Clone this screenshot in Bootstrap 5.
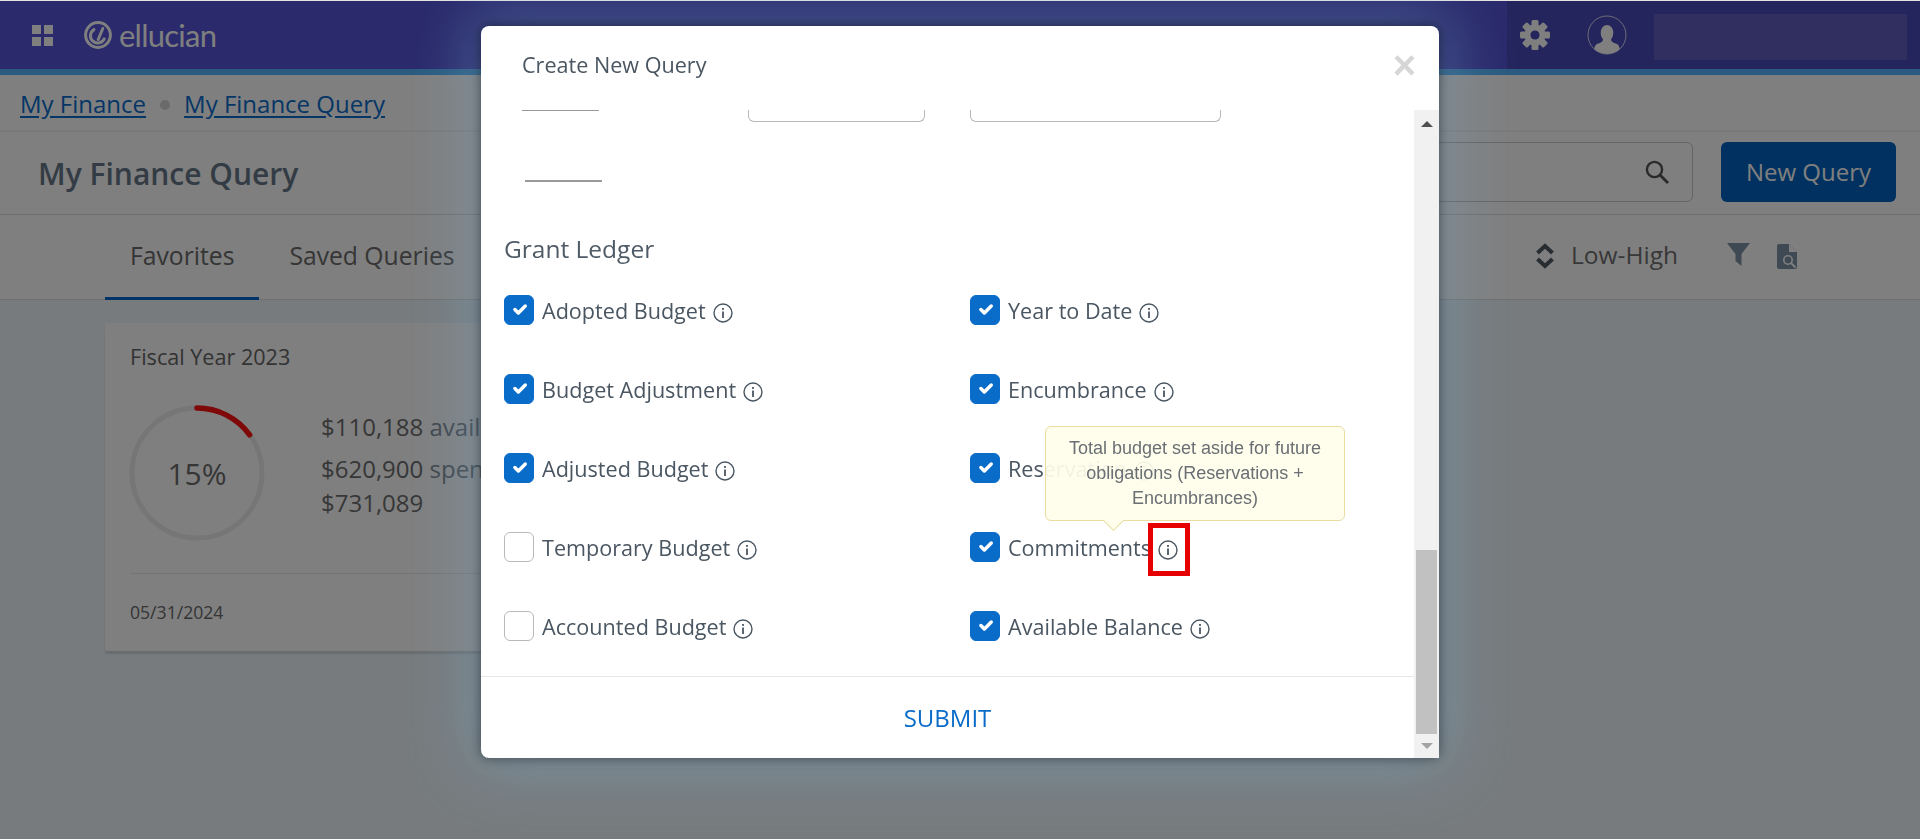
<!DOCTYPE html>
<html lang="en">
<head>
<meta charset="utf-8">
<title>My Finance Query</title>
<link href="https://cdn.jsdelivr.net/npm/bootstrap@5.3.0/dist/css/bootstrap.min.css" rel="stylesheet">
<style>
html,body{height:839px;overflow:hidden}
body{font-family:"Open Sans","Liberation Sans",sans-serif;background:#eef7fb;color:#5b6771}
.top-strip{height:75px;background:#5454d8;border-top:1px solid #e4e4e4;border-bottom:6px solid #55b5ff;padding:0}
.logo-word{font-family:Lato,"Liberation Sans",sans-serif;font-weight:400;font-size:31px;color:#fff;line-height:1;letter-spacing:-.75px}
.top-right{height:68px;background:#4a4abc;padding:0 13px 0 0;gap:0}
.mask-box{width:253px;height:46px;background:#605fc0;margin-top:3px}
.crumbs{height:57px;background:#fff;border-bottom:2px solid #f4f4f4;padding:2px 20px 0;gap:14px;font-size:24px}
.crumbs a{color:#0a6ccc;text-underline-offset:3px}
.crumb-dot{width:10px;height:10px;border-radius:50%;background:#d4d4d4;margin:2px 0 0}
.title-row{height:83px;background:#fff;border-bottom:1px solid #dcdcdc;padding:0 24px 0 38px}
.page-title{font-size:30px;font-weight:600;color:#66788a;margin:2px 0 0}
.title-tools{margin-top:-2px}
.search-stub{width:500px;height:60px;border:1px solid #c8c8c8;border-radius:6px;padding-right:22px;margin-right:28px}
.new-btn{width:175px;height:60px;background:#0062c0;color:#fff;font-size:24px;border-radius:6px;border:0;padding:0}
.tab-row{height:85px;background:#fff;border-bottom:1px solid #dcdcdc;padding:0 123px 0 105px}
.tab-item{height:85px;padding:0 25px;font-size:24.700px;color:#6d6d6d;font-weight:500;margin-right:5px;line-height:82px}
.tab-on{border-bottom:3px solid #0068d0;color:#6a6a6a}
.sort-txt{font-size:24.500px;color:#707070;margin-left:16px;margin-right:49px;margin-top:-2px}
.page-area{padding:23px 0 0 105px}
.fin-card{width:600px;height:328px;background:#fff;border:0;border-radius:2px;box-shadow:0 3px 2px rgba(0,0,0,.12);padding:0 25px}
.fin-name{font-size:21.600px;font-weight:500;color:#666;margin:22px 0 0;line-height:24px}
.fin-ring{width:136px;height:136px;flex:none;margin-left:-1px}
.fin-pct{font-size:30px;color:#6c6c6c}
.fin-text{font-size:24px;color:#6e6e6e;line-height:34px;margin:5px 0 0 56px;white-space:nowrap}
.fin-text div:first-child{margin-bottom:8px}
.fin-word{color:#7f8b96}
.fin-date{font-size:17.600px;color:#6a6a6a;border-top:1px solid #e8e8e8;margin-top:32px;padding-top:25px}
.modal-backdrop{top:1px;height:838px}
.dlg{max-width:958px;width:958px;margin:26px auto 0}
.dlg-box{height:732px;border:0;border-radius:8px;box-shadow:0 0 12px 1px rgba(0,0,0,.42),0 0 60px 14px rgba(125,175,210,.36);overflow:visible}
.dlg-head{height:84px;padding:0 23px 0 41px;border:0}
.dlg-title{font-size:21.600px;color:#4a5661;line-height:1;margin-top:-6px}
.dlg-x{font-size:40px;font-weight:700;color:#d6d6d6;line-height:1;font-family:"Liberation Sans",sans-serif;background:none;border:0;padding:0;margin-top:-7px}
.dlg-main{min-width:0;height:648px}
.dlg-body{padding:0 0 0 23px;overflow:hidden;height:566px;flex:none}
.stub-row{height:71px}
.stub-line{height:2px;width:77px;background:#999;margin-top:-1px}
.stub-in{height:12px;border:1px solid #b8b8b8;border-top:0;border-radius:0 0 6px 6px;margin-top:0}
.group-name{font-size:24.500px;font-weight:500;color:#4f5b66;line-height:28px;margin:53px 0 32px}
.check-grid{display:grid;grid-template-columns:466px 1fr;grid-auto-rows:79px}
.check-row{height:30px;gap:8px}
.check-row .form-check-input{width:30px;height:30px;margin:0;flex:none;border:1px solid #b9b9b9;border-radius:6px;background-size:23px;background-position:50% 42%}
.check-row .form-check-input:checked{background-color:#0a6cc9;border-color:#0a6cc9}
.check-txt{font-size:21.600px;color:#4a5661;font-weight:500;margin-top:4px;line-height:24px;white-space:nowrap}
.info-i{flex:none;margin:8px 0 0 -1px}
.dlg-foot{height:82px;border-top:1px solid #e6e6e6;padding:0}
.submit-link{font-size:24px;color:#0a6cc9;text-decoration:none;margin-top:4px}
.bar-col{width:25px;flex:none;background:#f1f1f1;padding:0 2px}
.bar-thumb{height:184px;background:#c1c1c1;margin-top:auto;margin-bottom:24px}
.bar-up{width:0;height:0;border:6px solid transparent;border-top:0;border-bottom:6px solid #505050;margin:11px auto 0}
.bar-down{width:0;height:0;border:6px solid transparent;border-bottom:0;border-top:6px solid #a3a3a3;position:absolute;bottom:9px;left:50%;margin-left:-6px}
.hint-box{position:absolute;left:564px;top:400px;width:300px;height:95px;background:rgba(255,254,236,.93);border:1px solid #e8dca0;border-radius:6px;color:#6a6f74;font-family:"Liberation Sans",Arial,sans-serif;font-size:18px;line-height:25px;text-align:center;padding:9px 20px}
.hint-box::after{content:"";position:absolute;left:60px;bottom:-8px;width:15px;height:15px;background:#fffeec;border-right:1px solid #e8dca0;border-bottom:1px solid #e8dca0;transform:rotate(45deg)}
.mark-box{position:absolute;left:667px;top:497px;width:42px;height:53px;border:5px solid #e60000}
</style>
</head>
<body>
<nav class="navbar top-strip d-flex justify-content-between align-items-start flex-nowrap">
  <div class="d-flex align-items-center" style="height:68px">
    <svg width="21" height="21" viewBox="0 0 21 21" style="margin-left:32px" aria-hidden="true"><g fill="#fff"><rect width="9" height="9" x="0" y="0"/><rect width="9" height="9" x="12" y="0"/><rect width="9" height="9" x="0" y="12"/><rect width="9" height="9" x="12" y="12"/></g></svg>
    <svg width="30" height="30" viewBox="0 0 30 30" style="margin:0 6px 0 30px" aria-hidden="true"><circle cx="15" cy="15" r="12.400" fill="none" stroke="#fff" stroke-width="3"/><path d="M19.800 8.500 15.200 19.500M11 9.600a7.200 7.200 0 1 0 10.200 9.200" fill="none" stroke="#fff" stroke-width="3" stroke-linecap="round"/></svg>
    <span class="logo-word">ellucian</span>
  </div>
  <div class="top-right d-flex align-items-center">
    <svg width="32" height="32" viewBox="0 0 32 32" style="margin:0 0 0 12px" aria-hidden="true"><g fill="#fff"><rect x="12.500" y="1" width="7" height="30" rx="1.500"/><rect x="12.500" y="1" width="7" height="30" rx="1.500" transform="rotate(45 16 16)"/><rect x="12.500" y="1" width="7" height="30" rx="1.500" transform="rotate(90 16 16)"/><rect x="12.500" y="1" width="7" height="30" rx="1.500" transform="rotate(135 16 16)"/></g><circle cx="16" cy="16" r="10.500" fill="#fff"/><circle cx="16" cy="16" r="4.600" fill="#4a4abc"/></svg>
    <svg width="40" height="40" viewBox="0 0 40 40" style="margin:0 27px 0 36px" aria-hidden="true"><defs><clipPath id="av"><circle cx="20" cy="20" r="19"/></clipPath></defs><circle cx="20" cy="20" r="19" fill="none" stroke="#fff" stroke-width=".8"/><g clip-path="url(#av)" fill="#fff"><ellipse cx="20" cy="18" rx="6.300" ry="8"/><path d="M16 24c0 3-3 4-6 5-2 1-3 3-3 11h26c0-8-1-10-3-11-3-1-6-2-6-5z"/></g></svg>
    <div class="mask-box"></div>
  </div>
</nav>

<div class="crumbs d-flex align-items-center">
  <a href="#">My Finance</a><span class="crumb-dot"></span><a href="#">My Finance Query</a>
</div>

<div class="title-row d-flex align-items-center justify-content-between">
  <h1 class="page-title">My Finance Query</h1>
  <div class="title-tools d-flex align-items-center">
    <div class="search-stub d-flex align-items-center justify-content-end">
      <svg width="26" height="26" viewBox="0 0 26 26" aria-hidden="true"><circle cx="10.500" cy="10.500" r="7.600" fill="none" stroke="#555" stroke-width="2.400"/><path d="M16 16l8 8" stroke="#555" stroke-width="2.800"/></svg>
    </div>
    <button class="btn new-btn" type="button">New Query</button>
  </div>
</div>

<div class="tab-row d-flex align-items-start">
  <div class="tab-item tab-on">Favorites</div>
  <div class="tab-item">Saved Queries</div>
  <div class="d-flex align-items-center ms-auto" style="height:82px">
    <svg width="20" height="26" viewBox="0 0 20 26" aria-hidden="true"><path d="M2.500 10 10 3l7.500 7M2.500 16l7.500 7 7.500-7" fill="none" stroke="#505a64" stroke-width="4"/></svg>
    <span class="sort-txt">Low-High</span>
    <svg width="23" height="24" viewBox="0 0 23 24" style="margin-right:27px;margin-top:-3px" aria-hidden="true"><path d="M0 0h23l-8.500 11v12l-6-5V11z" fill="#7c93a8"/></svg>
    <svg width="20" height="25" viewBox="0 0 20 25" aria-hidden="true"><path d="M2 0h10l8 8v15a2 2 0 0 1-2 2H2a2 2 0 0 1-2-2V2a2 2 0 0 1 2-2z" fill="#7c93a8"/><path d="M12 0v8h8z" fill="#fff"/><circle cx="11" cy="16" r="4.200" fill="none" stroke="#fff" stroke-width="1.600"/><path d="M14 19l4.500 4.500" stroke="#fff" stroke-width="1.800"/></svg>
  </div>
</div>

<main class="page-area">
  <div class="card fin-card">
    <div class="fin-name">Fiscal Year 2023</div>
    <div class="d-flex align-items-start" style="margin-top:36px">
      <div class="position-relative fin-ring">
        <svg width="136" height="136" viewBox="0 0 136 136" aria-hidden="true"><circle cx="68" cy="68" r="65" fill="none" stroke="#ececec" stroke-width="5"/><path d="M68 3A65 65 0 0 1 120.600 29.800" fill="none" stroke="#ff1010" stroke-width="5.500" stroke-linecap="round"/></svg>
        <div class="position-absolute top-50 start-50 translate-middle fin-pct">15%</div>
      </div>
      <div class="fin-text">
        <div>$110,188 <span class="fin-word">available</span></div>
        <div>$620,900 <span class="fin-word">spent</span></div>
        <div>$731,089</div>
      </div>
    </div>
    <div class="fin-date">05/31/2024</div>
  </div>
</main>

<div class="modal-backdrop fade show"></div>
<div class="modal fade show d-block" tabindex="-1" role="dialog">
  <div class="modal-dialog dlg">
    <div class="modal-content dlg-box">
      <div class="modal-header dlg-head">
        <span class="dlg-title">Create New Query</span>
        <button class="dlg-x ms-auto" type="button" aria-label="Close">×</button>
      </div>
      <div class="d-flex">
        <div class="dlg-main flex-grow-1 d-flex flex-column">
          <div class="modal-body dlg-body">
            <div class="stub-row d-flex align-items-start position-relative" style="padding-left:18px">
              <div class="stub-line"></div>
              <div class="stub-in" style="width:177px;margin-left:149px"></div>
              <div class="stub-in" style="width:251px;margin-left:45px"></div>
            </div>
            <div class="stub-line" style="margin-left:21px"></div>
            <div class="group-name">Grant Ledger</div>
            <div class="check-grid">
              <div class="check-row d-flex"><input class="form-check-input" type="checkbox" checked aria-label="Adopted Budget"><span class="check-txt">Adopted Budget</span><svg class="info-i" width="20" height="20" viewBox="0 0 20 20" aria-hidden="true"><circle cx="10" cy="10" r="9" fill="none" stroke="#4a5661" stroke-width="1.400"/><rect x="9.100" y="8.500" width="1.800" height="6.500" fill="#4a5661"/><rect x="9.100" y="5" width="1.800" height="1.900" fill="#4a5661"/></svg></div>
              <div class="check-row d-flex"><input class="form-check-input" type="checkbox" checked aria-label="Year to Date"><span class="check-txt">Year to Date</span><svg class="info-i" width="20" height="20" viewBox="0 0 20 20" aria-hidden="true"><circle cx="10" cy="10" r="9" fill="none" stroke="#4a5661" stroke-width="1.400"/><rect x="9.100" y="8.500" width="1.800" height="6.500" fill="#4a5661"/><rect x="9.100" y="5" width="1.800" height="1.900" fill="#4a5661"/></svg></div>
              <div class="check-row d-flex"><input class="form-check-input" type="checkbox" checked aria-label="Budget Adjustment"><span class="check-txt">Budget Adjustment</span><svg class="info-i" width="20" height="20" viewBox="0 0 20 20" aria-hidden="true"><circle cx="10" cy="10" r="9" fill="none" stroke="#4a5661" stroke-width="1.400"/><rect x="9.100" y="8.500" width="1.800" height="6.500" fill="#4a5661"/><rect x="9.100" y="5" width="1.800" height="1.900" fill="#4a5661"/></svg></div>
              <div class="check-row d-flex"><input class="form-check-input" type="checkbox" checked aria-label="Encumbrance"><span class="check-txt">Encumbrance</span><svg class="info-i" width="20" height="20" viewBox="0 0 20 20" aria-hidden="true"><circle cx="10" cy="10" r="9" fill="none" stroke="#4a5661" stroke-width="1.400"/><rect x="9.100" y="8.500" width="1.800" height="6.500" fill="#4a5661"/><rect x="9.100" y="5" width="1.800" height="1.900" fill="#4a5661"/></svg></div>
              <div class="check-row d-flex"><input class="form-check-input" type="checkbox" checked aria-label="Adjusted Budget"><span class="check-txt">Adjusted Budget</span><svg class="info-i" width="20" height="20" viewBox="0 0 20 20" aria-hidden="true"><circle cx="10" cy="10" r="9" fill="none" stroke="#4a5661" stroke-width="1.400"/><rect x="9.100" y="8.500" width="1.800" height="6.500" fill="#4a5661"/><rect x="9.100" y="5" width="1.800" height="1.900" fill="#4a5661"/></svg></div>
              <div class="check-row d-flex"><input class="form-check-input" type="checkbox" checked aria-label="Reservation"><span class="check-txt">Reservation</span><svg class="info-i" width="20" height="20" viewBox="0 0 20 20" aria-hidden="true"><circle cx="10" cy="10" r="9" fill="none" stroke="#4a5661" stroke-width="1.400"/><rect x="9.100" y="8.500" width="1.800" height="6.500" fill="#4a5661"/><rect x="9.100" y="5" width="1.800" height="1.900" fill="#4a5661"/></svg></div>
              <div class="check-row d-flex"><input class="form-check-input" type="checkbox" aria-label="Temporary Budget"><span class="check-txt">Temporary Budget</span><svg class="info-i" width="20" height="20" viewBox="0 0 20 20" aria-hidden="true"><circle cx="10" cy="10" r="9" fill="none" stroke="#4a5661" stroke-width="1.400"/><rect x="9.100" y="8.500" width="1.800" height="6.500" fill="#4a5661"/><rect x="9.100" y="5" width="1.800" height="1.900" fill="#4a5661"/></svg></div>
              <div class="check-row d-flex"><input class="form-check-input" type="checkbox" checked aria-label="Commitments"><span class="check-txt">Commitments</span><svg class="info-i" width="20" height="20" viewBox="0 0 20 20" aria-hidden="true"><circle cx="10" cy="10" r="9" fill="none" stroke="#4a5661" stroke-width="1.400"/><rect x="9.100" y="8.500" width="1.800" height="6.500" fill="#4a5661"/><rect x="9.100" y="5" width="1.800" height="1.900" fill="#4a5661"/></svg></div>
              <div class="check-row d-flex"><input class="form-check-input" type="checkbox" aria-label="Accounted Budget"><span class="check-txt">Accounted Budget</span><svg class="info-i" width="20" height="20" viewBox="0 0 20 20" aria-hidden="true"><circle cx="10" cy="10" r="9" fill="none" stroke="#4a5661" stroke-width="1.400"/><rect x="9.100" y="8.500" width="1.800" height="6.500" fill="#4a5661"/><rect x="9.100" y="5" width="1.800" height="1.900" fill="#4a5661"/></svg></div>
              <div class="check-row d-flex"><input class="form-check-input" type="checkbox" checked aria-label="Available Balance"><span class="check-txt">Available Balance</span><svg class="info-i" width="20" height="20" viewBox="0 0 20 20" aria-hidden="true"><circle cx="10" cy="10" r="9" fill="none" stroke="#4a5661" stroke-width="1.400"/><rect x="9.100" y="8.500" width="1.800" height="6.500" fill="#4a5661"/><rect x="9.100" y="5" width="1.800" height="1.900" fill="#4a5661"/></svg></div>
            </div>
          </div>
          <div class="modal-footer dlg-foot justify-content-center">
            <a class="submit-link" href="#">SUBMIT</a>
          </div>
        </div>
        <div class="bar-col d-flex flex-column position-relative">
          <div class="bar-up"></div>
          <div class="bar-thumb"></div>
          <div class="bar-down"></div>
        </div>
      </div>
      <div class="hint-box">Total budget set aside for future obligations (Reservations + Encumbrances)</div>
      <div class="mark-box"></div>
    </div>
  </div>
</div>
<script src="https://cdn.jsdelivr.net/npm/bootstrap@5.3.0/dist/js/bootstrap.bundle.min.js"></script>
</body>
</html>
